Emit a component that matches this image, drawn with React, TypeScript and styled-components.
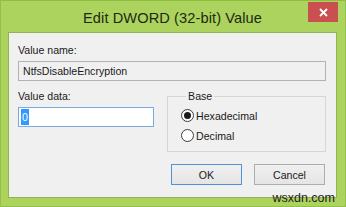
import styled, { createGlobalStyle } from "styled-components";

const GlobalStyle = createGlobalStyle`
    html, body {
        margin: 0;
        padding: 0;
        background: #8cbe3c;
    }
    * {
        box-sizing: border-box;
    }
`;

const Frame = styled.div`
    position: relative;
    width: 346px;
    height: 207px;
    background: #acd35e;
    border: 1px solid #93c046;
    border-top-color: #8fbd40;
    display: flex;
    flex-direction: column;
    padding: 0 8px 8px 7px;
    font-family: "Liberation Sans", Arial, sans-serif;
    color: #1a1a1a;
`;

const TitleBar = styled.div`
    position: relative;
    height: 31px;
    display: flex;
    align-items: center;
    justify-content: center;
    padding-top: 2px;
`;

const Title = styled.div`
    font-size: 14.6px;
    color: #1d2a12;
    letter-spacing: 0.1px;
`;

const CloseButton = styled.div`
    position: absolute;
    top: 1px;
    right: -1px;
    width: 30px;
    height: 20px;
    background: #c94f50;
    display: flex;
    align-items: center;
    justify-content: center;
`;

const Client = styled.div`
    flex: 1;
    background: #f0f0f0;
    border: 1px solid #8fb552;
    padding: 11px 10px 0 9px;
    display: flex;
    flex-direction: column;
    font-size: 10.6px;
`;

const Label = styled.div`
    line-height: 13px;
    height: 13px;
    color: #1a1a1a;
`;

const TextBox = styled.div<{ $readOnly?: boolean }>`
    height: 20px;
    margin-top: 4px;
    border: 1px solid ${p => (p.$readOnly ? "#b3b3b3" : "#7ba9e0")};
    background: ${p => (p.$readOnly ? "#f0f0f0" : "#ffffff")};
    display: flex;
    align-items: center;
    padding-left: 4px;
    line-height: 14px;
`;

const Selected = styled.span`
    background: #3399ff;
    color: #ffffff;
    padding: 1px 1px;
    margin-left: -2px;
`;

const Row = styled.div`
    display: flex;
    margin-top: 9px;
`;

const LeftCol = styled.div`
    width: 138px;
    display: flex;
    flex-direction: column;
`;

const Group = styled.fieldset`
    margin: 0 0 0 13px;
    padding: 6px 0 0 13px;
    width: 161px;
    height: 62px;
    border: 1px solid #d5d5d5;
    display: flex;
    flex-direction: column;
    gap: 7px;
`;

const Legend = styled.legend`
    padding: 0 2px;
    margin-left: 5px;
    line-height: 13px;
`;

const RadioRow = styled.div`
    display: flex;
    align-items: center;
    gap: 2px;
    height: 13px;
`;

const RadioCircle = styled.div<{ $checked?: boolean }>`
    width: 13px;
    height: 13px;
    border-radius: 50%;
    border: 1px solid #3c3c3c;
    background: #ffffff;
    display: flex;
    align-items: center;
    justify-content: center;
    &::after {
        content: "";
        width: 7px;
        height: 7px;
        border-radius: 50%;
        background: ${p => (p.$checked ? "#1a1a1a" : "transparent")};
    }
`;

const ButtonRow = styled.div`
    display: flex;
    justify-content: flex-end;
    gap: 12px;
    margin-top: 12px;
    padding-right: 1px;
`;

const Button = styled.div<{ $default?: boolean }>`
    width: 71px;
    height: 21px;
    border: 1px solid ${p => (p.$default ? "#4f92d9" : "#adadad")};
    background: linear-gradient(#f0f0f0, #e5e5e5);
    display: flex;
    align-items: center;
    justify-content: center;
    color: #1a1a1a;
`;

const Watermark = styled.div`
    position: absolute;
    right: 10px;
    bottom: 0px;
    font-family: "Liberation Sans", Arial, sans-serif;
    font-size: 12.5px;
    color: #1e1e1e;
    line-height: 15px;
`;

export default function App() {
    return (
        <>
            <GlobalStyle />
            <Frame>
                <TitleBar>
                    <Title>Edit DWORD (32-bit) Value</Title>
                    <CloseButton>
                        <svg width="9" height="9" viewBox="0 0 9 9">
                            <path d="M1 1 L8 8 M8 1 L1 8" stroke="#ffffff" strokeWidth="1.8" />
                        </svg>
                    </CloseButton>
                </TitleBar>
                <Client>
                    <Label>Value name:</Label>
                    <TextBox $readOnly>NtfsDisableEncryption</TextBox>
                    <Row>
                        <LeftCol>
                            <Label>Value data:</Label>
                            <TextBox>
                                <Selected>0</Selected>
                            </TextBox>
                        </LeftCol>
                        <Group>
                            <Legend>Base</Legend>
                            <RadioRow>
                                <RadioCircle $checked />
                                Hexadecimal
                            </RadioRow>
                            <RadioRow>
                                <RadioCircle />
                                Decimal
                            </RadioRow>
                        </Group>
                    </Row>
                    <ButtonRow>
                        <Button $default>OK</Button>
                        <Button>Cancel</Button>
                    </ButtonRow>
                </Client>
                <Watermark>wsxdn.com</Watermark>
            </Frame>
        </>
    );
}
